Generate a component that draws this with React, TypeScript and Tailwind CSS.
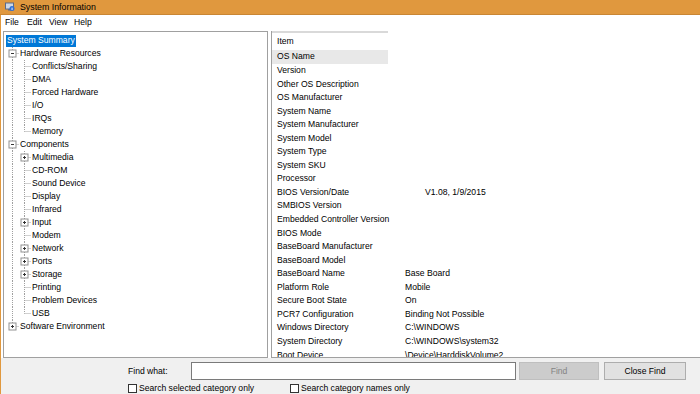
import React from "react";

type TreeRow = {
  label: string;
  level: 1 | 2;
  expander?: "plus" | "minus";
  lastChild?: boolean;
  lastRoot?: boolean;
};

const treeRows: TreeRow[] = [
  { label: "Hardware Resources", level: 1, expander: "minus" },
  { label: "Conflicts/Sharing", level: 2 },
  { label: "DMA", level: 2 },
  { label: "Forced Hardware", level: 2 },
  { label: "I/O", level: 2 },
  { label: "IRQs", level: 2 },
  { label: "Memory", level: 2, lastChild: true },
  { label: "Components", level: 1, expander: "minus" },
  { label: "Multimedia", level: 2, expander: "plus" },
  { label: "CD-ROM", level: 2 },
  { label: "Sound Device", level: 2 },
  { label: "Display", level: 2 },
  { label: "Infrared", level: 2 },
  { label: "Input", level: 2, expander: "plus" },
  { label: "Modem", level: 2 },
  { label: "Network", level: 2, expander: "plus" },
  { label: "Ports", level: 2, expander: "plus" },
  { label: "Storage", level: 2, expander: "plus" },
  { label: "Printing", level: 2 },
  { label: "Problem Devices", level: 2 },
  { label: "USB", level: 2, lastChild: true },
  { label: "Software Environment", level: 1, expander: "plus", lastRoot: true },
];

const items: { name: string; value?: string; indent?: boolean }[] = [
  { name: "OS Name" },
  { name: "Version" },
  { name: "Other OS Description" },
  { name: "OS Manufacturer" },
  { name: "System Name" },
  { name: "System Manufacturer" },
  { name: "System Model" },
  { name: "System Type" },
  { name: "System SKU" },
  { name: "Processor" },
  { name: "BIOS Version/Date", value: "V1.08, 1/9/2015", indent: true },
  { name: "SMBIOS Version" },
  { name: "Embedded Controller Version" },
  { name: "BIOS Mode" },
  { name: "BaseBoard Manufacturer" },
  { name: "BaseBoard Model" },
  { name: "BaseBoard Name", value: "Base Board" },
  { name: "Platform Role", value: "Mobile" },
  { name: "Secure Boot State", value: "On" },
  { name: "PCR7 Configuration", value: "Binding Not Possible" },
  { name: "Windows Directory", value: "C:\\WINDOWS" },
  { name: "System Directory", value: "C:\\WINDOWS\\system32" },
  { name: "Boot Device", value: "\\Device\\HarddiskVolume2" },
];

function Expander({ cx, kind }: { cx: number; kind: "plus" | "minus" }) {
  return (
    <g>
      <rect x={cx - 3.5} y={3} width={7} height={7} fill="#fff" stroke="#919191" strokeWidth={1} />
      <line x1={cx - 1.5} y1={6.5} x2={cx + 1.5} y2={6.5} stroke="#333" strokeWidth={1} />
      {kind === "plus" && <line x1={cx} y1={5} x2={cx} y2={8} stroke="#333" strokeWidth={1} />}
    </g>
  );
}

// tree connector lines, drawn per row
function Connectors({ row }: { row: TreeRow }) {
  const dot = { stroke: "#a0a0a0", strokeWidth: 1, strokeDasharray: "1 1" };
  return (
    <svg width={28} height={13} className="shrink-0">
      {row.level === 1 ? (
        <>
          <line x1={8.5} y1={0} x2={8.5} y2={row.lastRoot ? 6.5 : 13} {...dot} />
          <line x1={8.5} y1={6.5} x2={15} y2={6.5} {...dot} />
          {row.expander && <Expander cx={8.5} kind={row.expander} />}
        </>
      ) : (
        <>
          <line x1={8.5} y1={0} x2={8.5} y2={13} {...dot} />
          <line x1={20.5} y1={0} x2={20.5} y2={row.lastChild ? 6.5 : 13} {...dot} />
          <line x1={20.5} y1={6.5} x2={27} y2={6.5} {...dot} />
          {row.expander && <Expander cx={20.5} kind={row.expander} />}
        </>
      )}
    </svg>
  );
}

function Checkbox({ label }: { label: string }) {
  return (
    <div className="flex items-center gap-[2px]">
      <span className="w-[9px] h-[9px] border border-[#333] bg-white" />
      <span>{label}</span>
    </div>
  );
}

export default function App() {
  return (
    <div
      className="w-[700px] h-[394px] overflow-hidden bg-white text-[8.6px] text-black leading-none"
      style={{ fontFamily: '"Liberation Sans", Arial, sans-serif' }}
    >
      {/* Title bar */}
      <div className="h-[15px] bg-[#e0983e] border-b border-[#c98634] flex items-center pl-[5px] gap-[5px]">
        <svg width={10} height={10} viewBox="0 0 10 10">
          <rect x={0.5} y={1} width={8} height={6} fill="#cfd8e6" stroke="#5a6b8c" />
          <rect x={3} y={7} width={3} height={1.5} fill="#5a6b8c" />
          <circle cx={7} cy={6.5} r={2.5} fill="#2f6fd6" />
          <rect x={6.6} y={5.6} width={0.9} height={2.4} fill="#fff" />
        </svg>
        <span className="text-[8.8px]">System Information</span>
      </div>

      <div className="border-l border-[#e0983e] h-[379px] flex flex-col">
        {/* Menu bar */}
        <div className="h-[15px] flex items-center pl-[4px]">
          <span className="w-[22px]">File</span>
          <span className="w-[22px]">Edit</span>
          <span className="w-[25px]">View</span>
          <span>Help</span>
        </div>

        {/* Panes */}
        <div className="flex h-[327px] mt-[1px]">
          <div className="ml-[2px] w-[265px] border border-[#a0a0a0] pt-[2px] overflow-hidden">
            <div className="h-[13px] flex items-center pl-[2px]">
              <span className="bg-[#0078d7] text-white h-[12px] flex items-center px-[1px]">System Summary</span>
            </div>
            {treeRows.map((r) => (
              <div key={r.label} className="h-[13px] flex items-center">
                <Connectors row={r} />
                <span className={r.level === 1 ? "-ml-[12px]" : ""}>{r.label}</span>
              </div>
            ))}
          </div>

          <div className="ml-[3px] flex-1 border-l border-b border-[#a0a0a0] overflow-hidden">
            <div className="w-[116px] h-[19px] border-t-2 border-[#d9d9d9] flex items-center pl-[5px]">Item</div>
            {items.map((it, i) => (
              <div key={it.name} className="h-[13.55px] flex items-center">
                <div
                  className={
                    "w-[116px] h-full flex items-center pl-[5px] whitespace-nowrap " +
                    (i === 0 ? "bg-[#e8e8e8]" : "")
                  }
                >
                  {it.name}
                </div>
                {it.value && (
                  <div className={"whitespace-nowrap " + (it.indent ? "pl-[37px]" : "pl-[17px]")}>{it.value}</div>
                )}
              </div>
            ))}
          </div>
        </div>

        {/* Find bar */}
        <div className="flex-1 bg-[#f0f0f0] pl-[127px] pt-[4px]">
          <div className="flex items-center h-[18px]">
            <span className="w-[63px]">Find what:</span>
            <div className="w-[325px] h-[18px] bg-white border border-[#7a7a7a]" />
            <div className="ml-[3px] w-[80px] h-[18px] bg-[#cccccc] border border-[#bfbfbf] text-[#838383] flex items-center justify-center">
              Find
            </div>
            <div className="ml-[5px] w-[82px] h-[18px] bg-[#e1e1e1] border border-[#adadad] flex items-center justify-center">
              Close Find
            </div>
          </div>
          <div className="flex items-center h-[12px] mt-[2px]">
            <div className="w-[162px]">
              <Checkbox label="Search selected category only" />
            </div>
            <Checkbox label="Search category names only" />
          </div>
        </div>
      </div>
    </div>
  );
}
